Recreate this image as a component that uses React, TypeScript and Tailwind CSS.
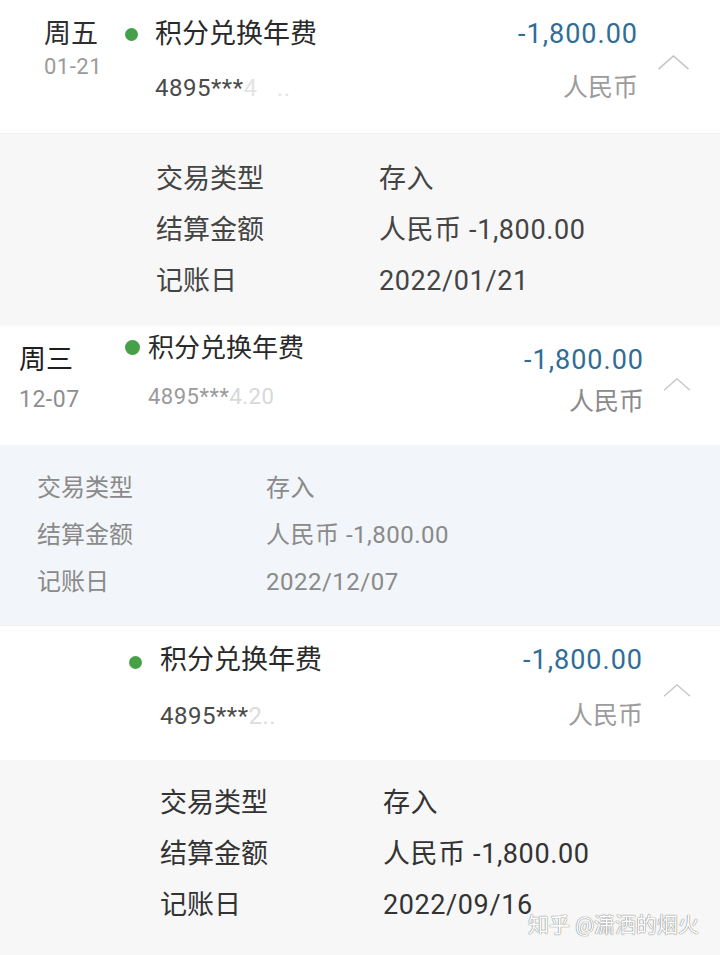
import React from 'react';

// one expanded transaction row from a bank statement list
type Detail = { label: string; value: string };

const Chevron = ({ className }: { className: string }) => (
  <svg className={className} viewBox="0 0 34 16" fill="none">
    <polyline points="1,15 17,1 33,15" stroke="#c4c4c4" strokeWidth="1.6" />
  </svg>
);

const Dot = ({ className }: { className: string }) => (
  <span className={`block rounded-full bg-[#45a048] shrink-0 ${className}`} />
);

function DetailPanel({ rows, wrap, label, value }: { rows: Detail[]; wrap: string; label: string; value: string }) {
  return (
    <div className={wrap}>
      {rows.map((r) => (
        <div key={r.label} className="flex">
          <span className={label}>{r.label}</span>
          <span className={value}>{r.value}</span>
        </div>
      ))}
    </div>
  );
}

const detailsFor = (date: string): Detail[] => [
  { label: '交易类型', value: '存入' },
  { label: '结算金额', value: '人民币 -1,800.00' },
  { label: '记账日', value: date },
];

export default function App() {
  return (
    <div className="w-[720px] h-[955px] overflow-hidden bg-white font-['Roboto','Noto_Sans_CJK_SC',sans-serif] relative">
      {/* Entry 1 */}
      <div className="flex h-[133px] pt-[18px] bg-white">
        <div className="w-[125px] pl-[44px] flex flex-col">
          <span className="text-[27px] leading-[32px] text-[#2e2e2e]">周五</span>
          <span className="mt-[4px] text-[22px] leading-[26px] tracking-[0.5px] text-[#9a9a9a]">01-21</span>
        </div>
        <Dot className="mt-[10px] w-[13px] h-[13px]" />
        <div className="ml-[17px] flex flex-col">
          <span className="text-[27px] leading-[32px] text-[#2a2a2a]">积分兑换年费</span>
          <span className="mt-[22px] text-[24px] leading-[32px] tracking-[0.5px] text-[#4a4a4a]">
            4895***<span className="text-[#e4e4e4]">4 &nbsp; ..</span>
          </span>
        </div>
        <div className="flex-1 flex flex-col items-end">
          <span className="text-[27px] leading-[32px] tracking-[1px] text-[#2f6d98]">-1,800.00</span>
          <span className="mt-[22px] text-[25px] leading-[32px] text-[#9c9c9c]">人民币</span>
        </div>
        <div className="w-[82px] flex">
          <Chevron className="ml-[19px] mt-[37px] w-[33px] h-[15px]" />
        </div>
      </div>
      <DetailPanel
        rows={detailsFor('2022/01/21')}
        wrap="h-[192px] bg-[#f7f7f7] pt-[20px] pl-[156px] border-t border-[#f0f0f0]"
        label="w-[223px] text-[27px] leading-[51px] text-[#444]"
        value="text-[27px] leading-[51px] tracking-[0.6px] text-[#444]"
      />

      {/* Entry 2 */}
      <div className="flex h-[120px] pt-[6px] bg-white border-t-2 border-[#fbfbfb]">
        <div className="w-[125px] pl-[19px] flex flex-col">
          <span className="mt-[12px] text-[27px] leading-[30px] text-[#1e1e1e]">周三</span>
          <span className="mt-[12px] text-[23px] leading-[26px] tracking-[0.5px] text-[#8e8e8e]">12-07</span>
        </div>
        <Dot className="mt-[7px] w-[15px] h-[15px]" />
        <div className="ml-[8px] flex flex-col">
          <span className="text-[26px] leading-[30px] text-[#2a2a2a]">积分兑换年费</span>
          <span className="mt-[19px] text-[22px] leading-[30px] tracking-[0.5px] text-[#9a9a9a]">
            4895***<span className="text-[#d8d8d8]">4.20</span>
          </span>
        </div>
        <div className="flex-1 flex flex-col items-end">
          <span className="mt-[12px] text-[27px] leading-[30px] tracking-[1px] text-[#2f6d98]">-1,800.00</span>
          <span className="mt-[12px] text-[25px] leading-[30px] text-[#8a8a8a]">人民币</span>
        </div>
        <div className="w-[76px] flex">
          <Chevron className="ml-[19px] mt-[45px] w-[28px] h-[13px]" />
        </div>
      </div>
      <DetailPanel
        rows={detailsFor('2022/12/07')}
        wrap="h-[180px] bg-[#f2f5f9] pt-[20px] pl-[37px]"
        label="w-[229px] text-[24px] leading-[47px] text-[#8a8a8a]"
        value="text-[24px] leading-[47px] tracking-[0.5px] text-[#8a8a8a]"
      />

      {/* Entry 3 */}
      <div className="flex h-[135px] pt-[18px] bg-white border-t border-[#eef0f2]">
        <div className="w-[129px]" />
        <Dot className="mt-[12px] w-[13px] h-[13px]" />
        <div className="ml-[18px] flex flex-col">
          <span className="text-[27px] leading-[32px] text-[#2a2a2a]">积分兑换年费</span>
          <span className="mt-[24px] text-[24px] leading-[32px] tracking-[0.5px] text-[#4a4a4a]">
            4895***<span className="text-[#dcdcdc]">2..</span>
          </span>
        </div>
        <div className="flex-1 flex flex-col items-end">
          <span className="text-[27px] leading-[32px] tracking-[1px] text-[#2f6d98]">-1,800.00</span>
          <span className="mt-[24px] text-[25px] leading-[32px] text-[#9c9c9c]">人民币</span>
        </div>
        <div className="w-[77px] flex">
          <Chevron className="ml-[20px] mt-[40px] w-[28px] h-[13px]" />
        </div>
      </div>
      <DetailPanel
        rows={detailsFor('2022/09/16')}
        wrap="h-[195px] bg-[#f7f7f7] pt-[18px] pl-[160px]"
        label="w-[223px] text-[27px] leading-[51px] text-[#333]"
        value="text-[27px] leading-[51px] tracking-[0.6px] text-[#333]"
      />

      {/* watermark */}
      <span className="absolute left-[528px] top-[911px] text-[21px] leading-[28px] text-white [text-shadow:0_0_1px_#777,0_0_1px_#777]">
        知乎 @潇洒的烟火
      </span>
    </div>
  );
}
